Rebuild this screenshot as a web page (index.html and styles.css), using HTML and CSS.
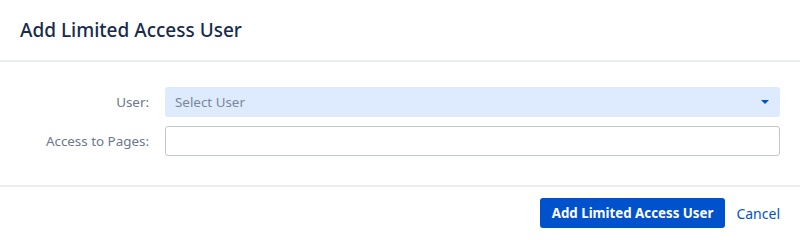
FILE: index.html
```html
<!DOCTYPE html>
<html>
<head>
<meta charset="utf-8">
<link rel="stylesheet" href="styles.css">
</head>
<body>
<div class="dialog">
  <header class="dialog-header">
    <h2 class="dialog-title">Add Limited Access User</h2>
  </header>
  <div class="dialog-body">
    <div class="form-row">
      <label class="form-label">User:</label>
      <div class="select">
        <span class="select-placeholder">Select User</span>
        <svg class="select-arrow" width="8" height="4" viewBox="0 0 8 4"><path d="M0 0H8L4 4Z" fill="#0052cc"/></svg>
      </div>
    </div>
    <div class="form-row">
      <label class="form-label">Access to Pages:</label>
      <div class="text-input"></div>
    </div>
  </div>
  <footer class="dialog-footer">
    <button class="btn-primary">Add Limited Access User</button>
    <button class="btn-link">Cancel</button>
  </footer>
</div>
</body>
</html>
```

FILE: styles.css
```css
html, body {
  margin: 0;
  padding: 0;
  background: #fff;
}
body {
  font-family: "Noto Sans", "Open Sans", sans-serif;
  font-size: 13.4px;
  color: #172b4d;
}
.dialog {
  width: 800px;
  height: 238px;
  display: flex;
  flex-direction: column;
}
.dialog-header {
  height: 60px;
  padding: 0 20px;
  display: flex;
  align-items: center;
  border-bottom: 2px solid #ebecf0;
}
.dialog-title {
  margin: 0;
  font-size: 19px;
  font-weight: 500;
  color: #172b4d;
}
.dialog-body {
  padding: 25px 20px 0 0;
  height: 98px;
  display: flex;
  flex-direction: column;
  gap: 9px;
}
.form-row {
  display: grid;
  grid-template-columns: 149px 1fr;
  column-gap: 16px;
  align-items: center;
}
.form-label {
  text-align: right;
  color: #6b778c;
  font-size: 13.4px;
}
.select {
  height: 30px;
  background: #deebff;
  border-radius: 3px;
  display: flex;
  align-items: center;
  justify-content: space-between;
  padding: 0 11px 0 10px;
}
.select-placeholder {
  color: #7a869a;
}
.text-input {
  height: 28px;
  border: 1px solid #c1c7d0;
  border-radius: 3px;
  background: #fff;
}
.dialog-footer {
  border-top: 2px solid #ebecf0;
  padding: 11px 20px 0 0;
  display: flex;
  justify-content: flex-end;
  align-items: center;
  gap: 11px;
}
.btn-primary {
  height: 30px;
  padding: 0 12px;
  border: none;
  border-radius: 3px;
  background: #0052cc;
  color: #fff;
  font-family: inherit;
  font-size: 13.3px;
  font-weight: 700;
}
.btn-link {
  border: none;
  background: none;
  padding: 0;
  color: #0052cc;
  font-family: inherit;
  font-size: 14px;
}
```
